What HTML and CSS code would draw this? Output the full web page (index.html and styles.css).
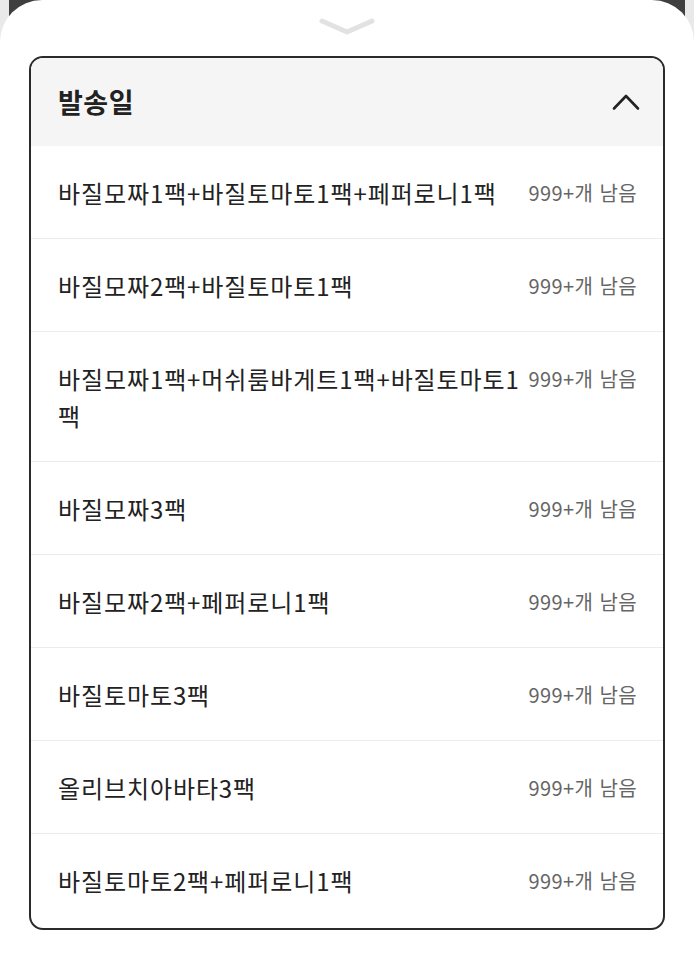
FILE: index.html
```html
<!DOCTYPE html>
<html lang="ko">
<head>
<meta charset="utf-8">
<title>발송일</title>
<link rel="stylesheet" href="styles.css">
</head>
<body>
<div class="sheet">
  <div class="handle">
    <svg width="56" height="20" viewBox="0 0 56 20"><polyline points="3,4 28,15 53,4" fill="none" stroke="#e2e2e2" stroke-width="5" stroke-linecap="round" stroke-linejoin="round"/></svg>
  </div>
  <div class="card">
    <div class="card-head">
      <span class="title">발송일</span>
      <svg class="chev" width="28" height="18" viewBox="0 0 28 18"><polyline points="2,15.5 14,3 26,15.5" fill="none" stroke="#222" stroke-width="2.6" stroke-linecap="round" stroke-linejoin="round"/></svg>
    </div>
    <ul class="list">
      <li class="row"><span class="name">바질모짜1팩+바질토마토1팩+페퍼로니1팩</span><span class="stock">999+개 남음</span></li>
      <li class="row"><span class="name">바질모짜2팩+바질토마토1팩</span><span class="stock">999+개 남음</span></li>
      <li class="row"><span class="name">바질모짜1팩+머쉬룸바게트1팩+바질토마토1팩</span><span class="stock">999+개 남음</span></li>
      <li class="row"><span class="name">바질모짜3팩</span><span class="stock">999+개 남음</span></li>
      <li class="row"><span class="name">바질모짜2팩+페퍼로니1팩</span><span class="stock">999+개 남음</span></li>
      <li class="row"><span class="name">바질토마토3팩</span><span class="stock">999+개 남음</span></li>
      <li class="row"><span class="name">올리브치아바타3팩</span><span class="stock">999+개 남음</span></li>
      <li class="row"><span class="name">바질토마토2팩+페퍼로니1팩</span><span class="stock">999+개 남음</span></li>
    </ul>
  </div>
</div>
</body>
</html>
```
FILE: styles.css
```css
html, body {
  margin: 0;
  padding: 0;
}
body {
  height: 959px;
  overflow: hidden;
  background: linear-gradient(to right, #e9e9e9 0, #e9e9e9 9px, #3f3f3f 9px, #3f3f3f 685px, #e9e9e9 685px);
  font-family: "Noto Sans CJK KR", "Noto Sans", sans-serif;
  color: #222;
}
.sheet {
  background: #fff;
  border-radius: 42px 42px 0 0;
  height: 100%;
  padding: 0 29px;
  box-sizing: border-box;
}
.handle {
  height: 56px;
  display: flex;
  justify-content: center;
  align-items: flex-start;
  padding-top: 17px;
  box-sizing: border-box;
}
.card {
  border: 2px solid #2a2a2a;
  border-radius: 14px;
  overflow: hidden;
}
.card-head {
  height: 88px;
  background: #f5f5f5;
  display: flex;
  align-items: center;
  justify-content: space-between;
  padding: 0 23px 0 27px;
}
.title {
  font-size: 27px;
  font-weight: 700;
  letter-spacing: 0.5px;
  color: #222;
  line-height: 1;
  margin-top: -1px;
}
.chev {
  display: block;
}
.list {
  list-style: none;
  margin: 0;
  padding: 0;
}
.row {
  display: flex;
  align-items: flex-start;
  gap: 7px;
  padding: 28px 26px 27px 27px;
  border-bottom: 1px solid #ececec;
}
.row:last-child {
  border-bottom: none;
  padding-bottom: 29px;
}
.name {
  flex: 1;
  font-size: 24px;
  letter-spacing: 0.9px;
  line-height: 37px;
  color: #222;
  word-break: break-all;
}
.stock {
  flex: none;
  font-size: 20px;
  letter-spacing: 0.4px;
  line-height: 37px;
  color: #666;
  white-space: nowrap;
}
```
